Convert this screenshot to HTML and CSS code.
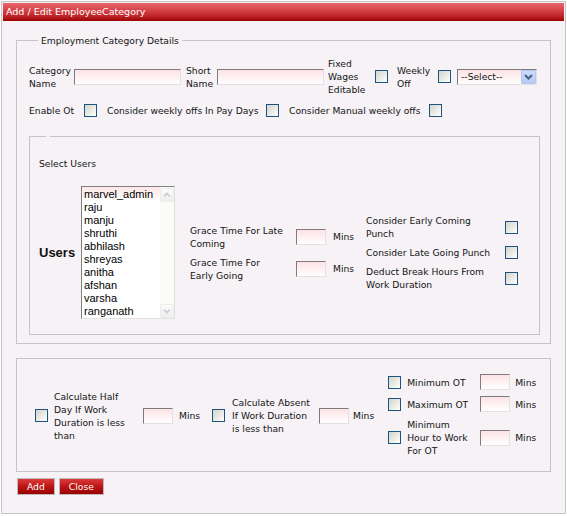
FILE: index.html
```html
<!DOCTYPE html>
<html lang="en">
<head>
    <meta charset="UTF-8">
    <title>Add / Edit EmployeeCategory</title>
    <link rel="stylesheet" href="styles.css">
</head>
<body>

    <div class="page">
        <div class="title">Add / Edit EmployeeCategory</div>

        <fieldset class="box details">
            <legend>Employment Category Details</legend>

            <div class="row top-row">
                <label class="lbl w-cat" for="cat-name">Category Name</label>
                <input type="text" id="cat-name" class="txt long">
                <label class="lbl w-short" for="short-name">Short Name</label>
                <input type="text" id="short-name" class="txt long">
                <label class="lbl w-fixed" for="fixed-wages">Fixed Wages Editable</label>
                <input type="checkbox" id="fixed-wages" class="chk m-fixed">
                <label class="lbl w-weekly" for="weekly-off">Weekly Off</label>
                <input type="checkbox" id="weekly-off" class="chk m-weekly">
                <div class="select">
                    <span>--Select--</span>
                    <span class="drop">
                        <svg width="13" height="12" viewBox="0 0 13 12"><polyline points="3,4 6.5,7.5 10,4" fill="none" stroke="#4a5f86" stroke-width="2"/></svg>
                    </span>
                </div>
            </div>

            <div class="row opt-row">
                <span class="lbl w-ot">Enable Ot</span>
                <input type="checkbox" class="chk m-opt">
                <span class="lbl w-payday">Consider weekly offs In Pay Days</span>
                <input type="checkbox" class="chk m-opt">
                <span class="lbl w-manual">Consider Manual weekly offs</span>
                <input type="checkbox" class="chk m-opt">
            </div>

            <fieldset class="box users-box">
                <legend class="blank"></legend>
                <div class="caption">Select Users</div>

                <div class="row users-row">
                    <div class="users-lbl">Users</div>

                    <div class="listbox">
                        <ul class="items">
                            <li>marvel_admin</li>
                            <li>raju</li>
                            <li>manju</li>
                            <li>shruthi</li>
                            <li>abhilash</li>
                            <li>shreyas</li>
                            <li>anitha</li>
                            <li>afshan</li>
                            <li>varsha</li>
                            <li>ranganath</li>
                        </ul>
                        <div class="scroll">
                            <span class="sbtn">
                                <svg width="12" height="12" viewBox="0 0 12 12"><polyline points="3,7.5 6,4.5 9,7.5" fill="none" stroke="#c4ccda" stroke-width="1.6"/></svg>
                            </span>
                            <span class="track"></span>
                            <span class="sbtn">
                                <svg width="12" height="12" viewBox="0 0 12 12"><polyline points="3,4.5 6,7.5 9,4.5" fill="none" stroke="#c4ccda" stroke-width="1.6"/></svg>
                            </span>
                        </div>
                    </div>

                    <div class="grace">
                        <div class="row">
                            <span class="lbl w-grace">Grace Time For Late Coming</span>
                            <input type="text" class="txt short m-grace">
                            <span class="mins m-mins-grace">Mins</span>
                        </div>
                        <div class="row">
                            <span class="lbl w-grace">Grace Time For Early Going</span>
                            <input type="text" class="txt short m-grace">
                            <span class="mins m-mins-grace">Mins</span>
                        </div>
                    </div>

                    <div class="punch">
                        <div class="row">
                            <span class="lbl w-punch">Consider Early Coming Punch</span>
                            <input type="checkbox" class="chk m-punch">
                        </div>
                        <div class="row">
                            <span class="lbl w-punch">Consider Late Going Punch</span>
                            <input type="checkbox" class="chk m-punch">
                        </div>
                        <div class="row">
                            <span class="lbl w-punch">Deduct Break Hours From Work Duration</span>
                            <input type="checkbox" class="chk m-punch">
                        </div>
                    </div>
                </div>
            </fieldset>
        </fieldset>

        <fieldset class="box limits">
            <input type="checkbox" class="chk">
            <span class="lbl w-half m-half">Calculate Half Day If Work Duration is less than</span>
            <input type="text" class="txt short m-half-in">
            <span class="mins m-half-mins">Mins</span>

            <input type="checkbox" class="chk m-absent-chk">
            <span class="lbl w-absent m-absent">Calculate Absent If Work Duration is less than</span>
            <input type="text" class="txt short m-absent-in">
            <span class="mins m-absent-mins">Mins</span>

            <div class="ot-group">
                <div class="row">
                    <input type="checkbox" class="chk">
                    <span class="lbl w-ot-lbl">Minimum OT</span>
                    <input type="text" class="txt short m-ot-in">
                    <span class="mins m-ot-mins">Mins</span>
                </div>
                <div class="row">
                    <input type="checkbox" class="chk">
                    <span class="lbl w-ot-lbl">Maximum OT</span>
                    <input type="text" class="txt short m-ot-in">
                    <span class="mins m-ot-mins">Mins</span>
                </div>
                <div class="row">
                    <input type="checkbox" class="chk">
                    <span class="lbl w-ot-lbl">Minimum Hour to Work For OT</span>
                    <input type="text" class="txt short m-ot-in">
                    <span class="mins m-ot-mins">Mins</span>
                </div>
            </div>
        </fieldset>

        <div class="actions">
            <button class="red-btn">Add</button>
            <button class="red-btn">Close</button>
        </div>
    </div>

</body>
</html>
```

FILE: styles.css
```css
:root {
    --page-bg: #f6f2f6;
    --line-color: #c6c2c6;
    --text-color: #141414;
    --check-border: #1c5484;
}

body {
    margin: 0;
    background: #ffffff;
    font-family: "DejaVu Sans", Verdana, sans-serif;
    font-size: 9.2px;
    line-height: 13px;
    color: var(--text-color);
}

.page {
    box-sizing: border-box;
    margin: 1px;
    width: 565px;
    height: 513px;
    padding: 1px;
    border: 1px solid var(--line-color);
    background: var(--page-bg);
}

.title {
    height: 18px;
    line-height: 18px;
    padding-left: 3px;
    font-size: 9.5px;
    color: #ffffff;
    background: linear-gradient(to bottom, #e8656b 0%, #d6444a 40%, #bb2226 75%, #9e0202 100%);
}

.row {
    display: flex;
    align-items: center;
}

.box {
    box-sizing: border-box;
    margin: 0;
    padding: 0;
    min-width: 0;
    border: 1px solid var(--line-color);
}

.box legend {
    padding: 0 3px;
    margin-left: 9px;
    line-height: 13px;
}

.details {
    width: 535px;
    margin: 13px 0 0 13px;
    padding: 10px 0 8px 12px;
}

.lbl {
    flex-shrink: 0;
}

/* text boxes */
.txt {
    box-sizing: border-box;
    height: 16px;
    margin: 0;
    padding: 0 2px;
    font: inherit;
    border: 1px solid;
    border-color: #7c7c7c #e4e0e4 #e4e0e4 #7c7c7c;
    background: linear-gradient(to bottom, #fde2e4, #ffffff);
    flex-shrink: 0;
}

.txt.long { width: 107px; }
.txt.short { width: 30px; }

.chk {
    appearance: none;
    -webkit-appearance: none;
    box-sizing: border-box;
    width: 13px;
    height: 13px;
    margin: 0;
    border: 1px solid var(--check-border);
    background: linear-gradient(135deg, #d4d4cc 0%, #f2f2ee 70%, #ffffff 100%);
    flex-shrink: 0;
}

.mins { flex-shrink: 0; }

/* first row */
.top-row { height: 39px; }
.w-cat { width: 43px; margin-right: 2px; }
.w-short { width: 30px; margin: 0 1px 0 5px; }
.w-fixed { width: 40px; margin-left: 4px; }
.m-fixed { margin-left: 7px; }
.w-weekly { width: 35px; margin-left: 9px; }
.m-weekly { margin-left: 6px; }

.select {
    box-sizing: border-box;
    display: flex;
    align-items: center;
    width: 80px;
    height: 16px;
    margin-left: 6px;
    padding-left: 3px;
    border: 1px solid;
    border-color: #7c7c7c #e4e0e4 #e4e0e4 #7c7c7c;
    background: linear-gradient(to bottom, #fde2e4, #ffffff);
}

.drop {
    display: flex;
    align-items: center;
    justify-content: center;
    box-sizing: border-box;
    width: 15px;
    height: 14px;
    margin-left: auto;
    border: 1px solid #b4c6f0;
    border-radius: 1px;
    background: linear-gradient(to bottom, #cfdcfd, #b6c9f6);
}

/* second row */
.opt-row { height: 13px; margin-top: 8px; }
.w-ot { width: 48px; }
.w-payday { width: 152px; }
.w-manual { width: 133px; }
.m-opt { margin: 0 10px 0 7px; }

/* users */
.users-box {
    width: 511px;
    margin-top: 19px;
    padding: 20px 0 15px 9px;
}

.users-box legend.blank {
    margin-left: 7px;
    padding: 0 2px;
    height: 0;
}

.users-row {
    margin-top: 16px;
}

.users-lbl {
    width: 42px;
    font-family: "Liberation Sans", Arial, sans-serif;
    font-size: 13px;
    font-weight: bold;
    color: #111111;
}

.listbox {
    box-sizing: border-box;
    display: flex;
    width: 94px;
    height: 133px;
    border: 1px solid;
    border-color: #808080 #e2dee2 #e2dee2 #808080;
    background: linear-gradient(to bottom, #fde6e8, #ffffff 14px);
}

.items {
    flex: 1;
    margin: 0;
    padding: 1px 0 0 2px;
    list-style: none;
    overflow: hidden;
    font-family: "Liberation Sans", Arial, sans-serif;
    font-size: 11px;
    line-height: 13px;
    color: #000000;
}

.scroll {
    display: flex;
    flex-direction: column;
    width: 14px;
    padding-top: 1px;
    background: #fbfbf8;
}

.sbtn {
    box-sizing: border-box;
    display: flex;
    align-items: center;
    justify-content: center;
    height: 14px;
    border: 1px solid #ecece8;
    border-radius: 2px;
    background: linear-gradient(to bottom, #fbfbf9, #eeeeea);
}

.track { flex: 1; }

.grace {
    display: flex;
    flex-direction: column;
    gap: 6px;
    margin-left: 15px;
}

.w-grace { width: 96px; }
.m-grace { margin-left: 10px; }
.m-mins-grace { margin-left: 7px; }

.punch {
    display: flex;
    flex-direction: column;
    gap: 6px;
    margin-left: 12px;
}

.w-punch { width: 130px; }
.m-punch { margin-left: 9px; }

/* limits box */
.limits {
    display: flex;
    align-items: center;
    width: 535px;
    margin: 14px 0 0 13px;
    padding: 15px 0 14px 18px;
}

.w-half { width: 76px; }
.m-half { margin-left: 6px; }
.m-half-in { margin-left: 13px; }
.m-half-mins { margin-left: 6px; }
.m-absent-chk { margin-left: 12px; }
.w-absent { width: 82px; }
.m-absent { margin-left: 7px; }
.m-absent-in { margin-left: 5px; }
.m-absent-mins { margin-left: 4px; }

.ot-group {
    display: flex;
    flex-direction: column;
    gap: 6px;
    margin-left: 14px;
}

.ot-group .row { min-height: 16px; }
.w-ot-lbl { width: 66px; margin-left: 6px; }
.m-ot-in { margin-left: 7px; }
.m-ot-mins { margin-left: 5px; }

/* buttons */
.actions {
    display: flex;
    gap: 4px;
    margin: 6px 0 0 14px;
}

.red-btn {
    height: 17px;
    padding: 0 9px;
    border: 1px solid #bcb8bc;
    font: inherit;
    line-height: 15px;
    color: #ffffff;
    background: linear-gradient(to bottom, #dc3c3c 0%, #bf1818 45%, #9a0000 100%);
    cursor: pointer;
}
```
